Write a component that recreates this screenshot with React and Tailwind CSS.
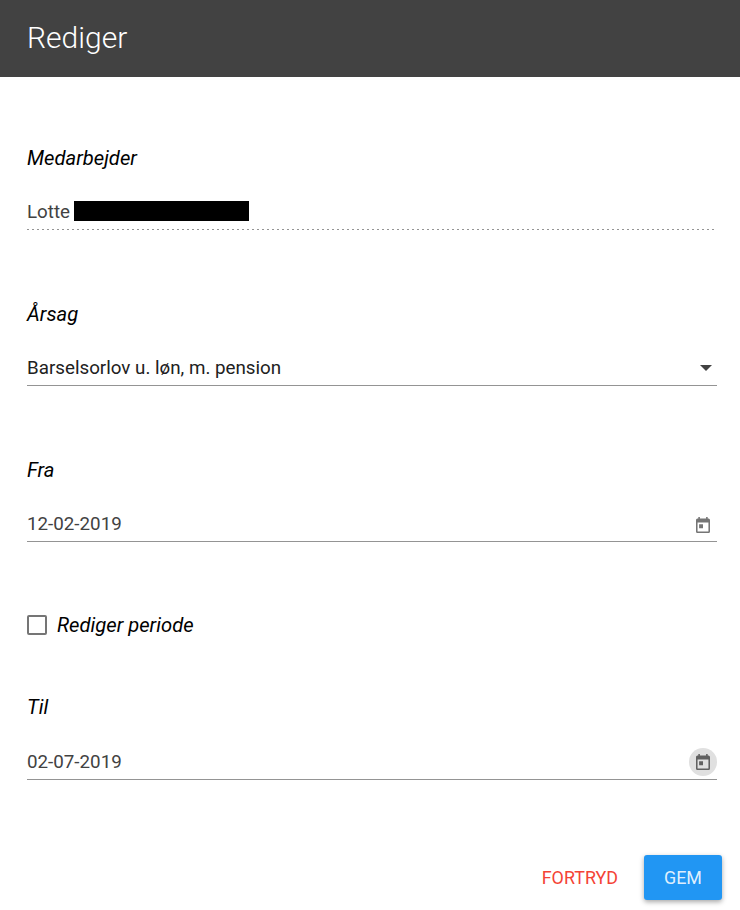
const TODAY_PATH =
  "M19 3h-1V1h-2v2H8V1H6v2H5c-1.11 0-1.99.9-1.99 2L3 19c0 1.1.89 2 2 2h14c1.1 0 2-.9 2-2V5c0-1.1-.9-2-2-2zm0 16H5V8h14v11zM7 10h5v5H7z";

function CalendarButton({ active }) {
  return (
    <button
      type="button"
      aria-label="Kalender"
      className={
        active
          ? "mb-0.5 flex size-7 items-center justify-center rounded-full bg-[#e0e0e0] text-[#616161]"
          : "flex size-7 items-center justify-center rounded-full text-[#757575]"
      }
    >
      <svg viewBox="3 1 18 20" preserveAspectRatio="none" className="h-4 w-3.5" fill="currentColor">
        <path d={TODAY_PATH} />
      </svg>
    </button>
  );
}

function Label({ children }) {
  return <div className="h-6 text-[20.2px] leading-6 italic text-black">{children}</div>;
}

function Field({ label, children, end, gap = "h-[23px]" }) {
  return (
    <div>
      <Label>{label}</Label>
      <div className={gap} />
      <div className="flex h-[37px] items-center justify-between border-b border-[#949494] pt-1 leading-7">
        {children}
        {end}
      </div>
    </div>
  );
}

export default function App() {
  return (
    <div className="flex h-[910px] w-[740px] flex-col overflow-hidden bg-white font-['Roboto',sans-serif] text-[18.78px]">
      <header className="flex h-[77px] items-center bg-[#424242] pb-0.5 pl-[27px]">
        <h1 className="text-[30px] leading-9 font-light text-white">Rediger</h1>
      </header>

      <main className="flex flex-col pt-[69px] pr-[23px] pl-[27px]">
        <div className="h-[84px]">
          <Label>Medarbejder</Label>
          <div className="mt-[23px] flex h-9 items-center gap-1 text-[#424242]">
            <span className="w-[43px] pt-0.5 leading-7">Lotte</span>
            <span className="h-5 w-[175px] bg-black" />
          </div>
          <div className="h-px w-[688px] bg-[repeating-linear-gradient(to_right,#949494_0_2px,transparent_2px_5px)]" />
        </div>

        <div className="mt-[72px]">
          <Field
            label="Årsag"
            end={
              <svg viewBox="0 0 12 6" className="mr-[5px] mb-0.5 h-1.5 w-3" fill="#424242">
                <path d="M0 0h12L6 6z" />
              </svg>
            }
          >
            <span className="mb-0.5 text-[#212121]">Barselsorlov u. løn, m. pension</span>
          </Field>
        </div>

        <div className="mt-[72px]">
          <Field label="Fra" end={<CalendarButton />}>
            <span className="mb-0.5 text-[#424242]">12-02-2019</span>
          </Field>
        </div>

        <div className="mt-[71px] flex h-6 items-center gap-2.5">
          <span role="checkbox" aria-checked="false" className="size-5 rounded-[2px] border-2 border-[#757575]" />
          <Label>Rediger periode</Label>
        </div>

        <div className="mt-[58px]">
          <Field label="Til" gap="h-6" end={<CalendarButton active />}>
            <span className="mb-0.5 text-[#424242]">02-07-2019</span>
          </Field>
        </div>
      </main>

      <footer className="mt-[75px] flex h-[45px] items-center justify-end gap-[26px] pr-[18px] text-[17.9px]">
        <button type="button" className="pt-px leading-7 text-[#f44336]">FORTRYD</button>
        <button
          type="button"
          className="h-[45px] w-[78px] rounded-[3px] bg-[#2196f3] pt-px leading-7 text-white/87 shadow-[0_2px_5px_rgba(0,0,0,0.35)]"
        >
          GEM
        </button>
      </footer>
    </div>
  );
}
